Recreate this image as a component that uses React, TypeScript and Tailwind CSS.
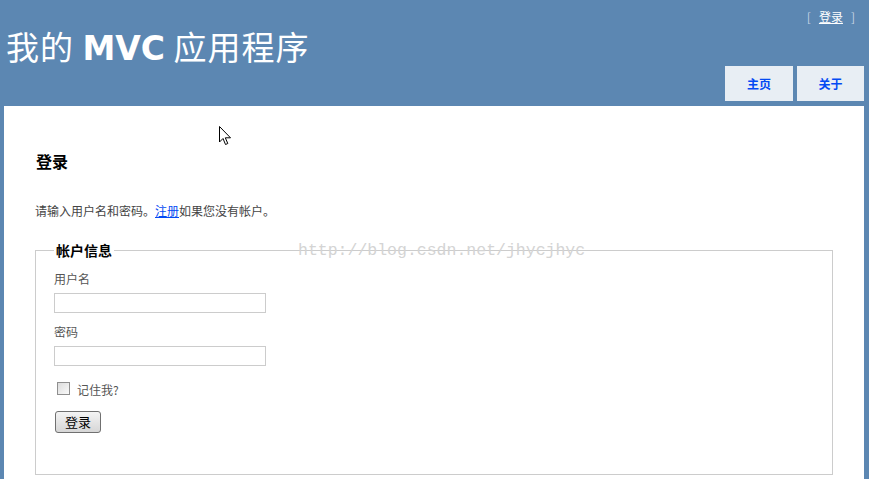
import React from 'react';

const cjk = "font-['Noto_Sans_CJK_SC','DejaVu_Sans',sans-serif]";

const App: React.FC = () => {
  return (
    <div className={`relative w-full min-h-[479px] h-[479px] overflow-hidden bg-[#5c87b2] flex flex-col ${cjk}`}>
      {/* Header */}
      <div className="flex justify-between h-[106px] shrink-0 pl-[6px] pr-[5px]">
        <h1 className="pt-[26px] text-[33px] leading-[40px] tracking-[1px] text-white font-normal whitespace-nowrap">
          我的 <span className="font-['DejaVu_Sans',sans-serif] font-bold tracking-normal">MVC</span> 应用程序
        </h1>
        <div className="flex flex-col items-end justify-between pb-[5px]">
          <div className="pt-[9px] pr-[9px] text-[12px] leading-[16px] text-[#c4d4e4] flex">
            <span>[</span>
            <a href="#" className="mx-[8px] text-white underline">登录</a>
            <span>]</span>
          </div>
          <div className="flex gap-[4px]">
            <a href="#" className="w-[68px] h-[35px] flex items-center justify-center bg-[#e8eef4] text-[#034af3] text-[12px] font-bold">主页</a>
            <a href="#" className="w-[67px] h-[35px] flex items-center justify-center bg-[#e8eef4] text-[#034af3] text-[12px] font-bold">关于</a>
          </div>
        </div>
      </div>

      {/* Main */}
      <div className="flex-1 ml-[4px] mr-[5px] bg-white px-[31px] pt-[45px]">
        <h2 className="text-[16px] leading-[20px] font-bold text-black pl-[1px]">登录</h2>
        <p className="mt-[32px] text-[12px] leading-[16px] text-[#444]">
          请输入用户名和密码。<a href="#" className="text-[#034af3] underline">注册</a>如果您没有帐户。
        </p>

        <fieldset className="mt-[22px] border border-[#cccccc] pl-[18px] pr-[18px] h-[234px]">
          <legend className="px-[2px] text-[14px] leading-[18px] font-bold text-black">帐户信息</legend>
          <div className="mt-[12px] text-[12px] leading-[16px] text-[#555]">用户名</div>
          <input type="text" className="mt-[6px] block w-[212px] h-[20px] border border-[#cccccc] bg-white" />
          <div className="mt-[11px] text-[12px] leading-[16px] text-[#555]">密码</div>
          <input type="password" className="mt-[6px] block w-[212px] h-[20px] border border-[#cccccc] bg-white" />
          <div className="mt-[12px] flex items-center">
            <span className="ml-[3px] w-[13px] h-[13px] border border-[#8f8f8f] bg-gradient-to-br from-[#dcdcdc] to-[#fafafa]" />
            <span className="ml-[7px] text-[12px] leading-[16px] text-[#555] pt-[4px]">记住我?</span>
          </div>
          <button className="mt-[13px] ml-[1px] w-[46px] h-[22px] border border-[#707070] rounded-[3px] bg-gradient-to-b from-[#f4f4f4] to-[#d6d6d6] text-[13px] leading-[18px] text-black">
            登录
          </button>
        </fieldset>
      </div>

      {/* watermark */}
      <div className="absolute left-[298px] top-[241px] font-['Liberation_Mono',monospace] text-[16.5px] leading-[20px] text-[#d4d4d4] pointer-events-none">
        http://blog.csdn.net/jhycjhyc
      </div>

      {/* mouse cursor */}
      <svg className="absolute left-[219px] top-[126px]" width="13" height="20" viewBox="0 0 13 20">
        <path d="M0.5 0.5 L0.5 16 L4 12.5 L6.5 18.5 L8.8 17.5 L6.3 11.8 L11.5 11.8 Z" fill="#fff" stroke="#000" strokeWidth="1" />
      </svg>
    </div>
  );
};

export default App;
